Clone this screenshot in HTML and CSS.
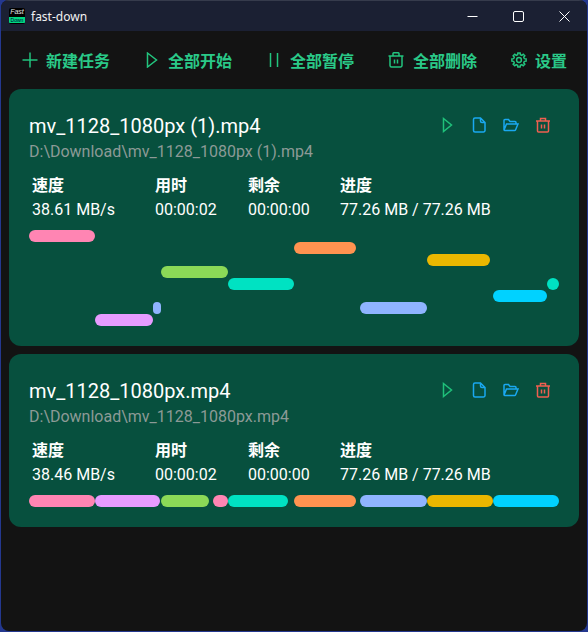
FILE: index.html
```html
<!DOCTYPE html>
<html lang="zh">
<head>
<meta charset="utf-8">
<title>fast-down</title>
<link rel="stylesheet" href="styles.css">
</head>
<body>
<div class="window">
  <header class="titlebar">
    <div class="logo"><span class="logo-fast">Fast</span><span class="logo-down">Down</span></div>
    <span class="app-name">fast-down</span>
    <div class="win-controls">
      <svg class="win-icon" viewBox="0 0 11 11"><path d="M.5 5.500h10" /></svg>
      <svg class="win-icon" viewBox="0 0 11 11"><rect x=".5" y=".5" width="10" height="10" rx="1.500" /></svg>
      <svg class="win-icon" viewBox="0 0 11 11"><path d="M.5 .5l10 10M10.500 .5l-10 10" /></svg>
    </div>
  </header>
  <nav class="toolbar">
    <button class="tool"><svg class="tool-icon" viewBox="0 0 16 16"><path d="M8 .5v15M.5 8h15" /></svg>新建任务</button>
    <button class="tool"><svg class="tool-icon" viewBox="0 0 16 16"><path d="M3.500 1l9 7-9 7z" /></svg>全部开始</button>
    <button class="tool"><svg class="tool-icon" viewBox="0 0 16 16"><path d="M4.500 1v14M11.500 1v14" /></svg>全部暂停</button>
    <button class="tool tool-del"><svg class="tool-icon" viewBox="0 0 16 16"><path d="M.5 4h15M5 4V1.500A1 1 0 0 1 6 .8h4a1 1 0 0 1 1 .7V4M2 4v9.500A1.500 1.500 0 0 0 3.500 15h9a1.500 1.500 0 0 0 1.500-1.500V4M6.500 7.500v4M9.500 7.500v4" /></svg>全部删除</button>
    <button class="tool"><svg class="tool-icon" viewBox="0 0 16 16"><circle cx="8" cy="8" r="2.400" /><path d="M6.670 2.660L6.870 .89H9.130L9.330 2.660L10.830 3.290L12.230 2.180L13.820 3.770L12.710 5.170L13.340 6.670L15.110 6.870V9.130L13.340 9.330L12.710 10.830L13.820 12.230L12.230 13.820L10.830 12.710L9.330 13.340L9.130 15.110H6.870L6.670 13.340L5.170 12.710L3.770 13.820L2.180 12.230L3.290 10.830L2.660 9.330L.89 9.130V6.870L2.660 6.670L3.290 5.170L2.180 3.770L3.770 2.180L5.170 3.290Z" /></svg>设置</button>
  </nav>
  <main class="list">
    <article class="card">
      <div class="card-head">
        <div>
          <h2 class="file-name">mv_1128_1080px (1).mp4</h2>
          <p class="file-path">D:\Download\mv_1128_1080px (1).mp4</p>
        </div>
        <div class="actions">
          <svg class="act act-green" viewBox="0 0 16 16"><path d="M4.500 1.500l8 6.500-8 6.500z" /></svg>
          <svg class="act act-blue" viewBox="0 0 16 16"><path d="M4 1h5.500L14 5.500v8a1.500 1.500 0 0 1-1.500 1.500h-8.500A1.500 1.500 0 0 1 2.500 13.500V2.500A1.500 1.500 0 0 1 4 1zM9.500 1v3a1.500 1.500 0 0 0 1.500 1.500h3" /></svg>
          <svg class="act act-blue" viewBox="0 0 16 16"><path d="M1 13V3.500A1 1 0 0 1 2 2.500h3.500l1.500 2h5a1 1 0 0 1 1 1V7M1 13l2.500-6H15l-2.500 6a1 1 0 0 1-1 .5H2a1 1 0 0 1-1-.5z" /></svg>
          <svg class="act act-red" viewBox="0 0 16 16"><path d="M1 4h14M5.500 4V1.500h5V4M2.500 4v10a1 1 0 0 0 1 1h9a1 1 0 0 0 1-1V4M6.500 7.500v4M9.500 7.500v4" /></svg>
        </div>
      </div>
      <div class="stats">
        <div class="stat stat-speed"><b>速度</b><span>38.61 MB/s</span></div>
        <div class="stat stat-used"><b>用时</b><span>00:00:02</span></div>
        <div class="stat stat-left"><b>剩余</b><span>00:00:00</span></div>
        <div class="stat"><b>进度</b><span>77.26 MB / 77.26 MB</span></div>
      </div>
      <div class="track track-tall">
        <i class="bar pink" style="left:0;top:0;width:66px"></i>
        <i class="bar lilac" style="left:66px;top:84px;width:58px"></i>
        <i class="bar periwinkle" style="left:124px;top:72px;width:8px"></i>
        <i class="bar green" style="left:132px;top:36px;width:67px"></i>
        <i class="bar teal" style="left:199px;top:48px;width:66px"></i>
        <i class="bar orange" style="left:265px;top:12px;width:62px"></i>
        <i class="bar periwinkle" style="left:331px;top:72px;width:67px"></i>
        <i class="bar yellow" style="left:398px;top:24px;width:63px"></i>
        <i class="bar cyan" style="left:464px;top:60px;width:54px"></i>
        <i class="bar teal" style="left:518px;top:48px;width:12px"></i>
      </div>
    </article>
    <article class="card">
      <div class="card-head">
        <div>
          <h2 class="file-name">mv_1128_1080px.mp4</h2>
          <p class="file-path">D:\Download\mv_1128_1080px.mp4</p>
        </div>
        <div class="actions">
          <svg class="act act-green" viewBox="0 0 16 16"><path d="M4.500 1.500l8 6.500-8 6.500z" /></svg>
          <svg class="act act-blue" viewBox="0 0 16 16"><path d="M4 1h5.500L14 5.500v8a1.500 1.500 0 0 1-1.500 1.500h-8.500A1.500 1.500 0 0 1 2.500 13.500V2.500A1.500 1.500 0 0 1 4 1zM9.500 1v3a1.500 1.500 0 0 0 1.500 1.500h3" /></svg>
          <svg class="act act-blue" viewBox="0 0 16 16"><path d="M1 13V3.500A1 1 0 0 1 2 2.500h3.500l1.500 2h5a1 1 0 0 1 1 1V7M1 13l2.500-6H15l-2.500 6a1 1 0 0 1-1 .5H2a1 1 0 0 1-1-.5z" /></svg>
          <svg class="act act-red" viewBox="0 0 16 16"><path d="M1 4h14M5.500 4V1.500h5V4M2.500 4v10a1 1 0 0 0 1 1h9a1 1 0 0 0 1-1V4M6.500 7.500v4M9.500 7.500v4" /></svg>
        </div>
      </div>
      <div class="stats">
        <div class="stat stat-speed"><b>速度</b><span>38.46 MB/s</span></div>
        <div class="stat stat-used"><b>用时</b><span>00:00:02</span></div>
        <div class="stat stat-left"><b>剩余</b><span>00:00:00</span></div>
        <div class="stat"><b>进度</b><span>77.26 MB / 77.26 MB</span></div>
      </div>
      <div class="track track-flat">
        <i class="bar pink" style="left:0;top:0;width:66px"></i>
        <i class="bar lilac" style="left:66px;top:0;width:65px"></i>
        <i class="bar green" style="left:132px;top:0;width:48px"></i>
        <i class="bar pink" style="left:184px;top:0;width:15px"></i>
        <i class="bar teal" style="left:199px;top:0;width:60px"></i>
        <i class="bar orange" style="left:265px;top:0;width:62px"></i>
        <i class="bar periwinkle" style="left:331px;top:0;width:67px"></i>
        <i class="bar yellow" style="left:398px;top:0;width:66px"></i>
        <i class="bar cyan" style="left:464px;top:0;width:66px"></i>
      </div>
    </article>
  </main>
</div>
</body>
</html>
```

FILE: styles.css
```css
* { box-sizing: border-box; }
html, body { margin: 0; height: 100%; }
body {
  background: #24388f;
  font-family: Roboto, "Noto Sans CJK SC", sans-serif;
  overflow: hidden;
}
.window {
  height: 631px;
  margin: 0 1px;
  background: #131313;
  border-radius: 8px;
  overflow: hidden;
  display: flex;
  flex-direction: column;
}
.titlebar {
  height: 31px;
  flex: none;
  background: #1b2033;
  border-top: 1px solid #363b4c;
  display: flex;
  align-items: center;
  padding-left: 8px;
  color: #fff;
}
.logo {
  width: 16px;
  height: 16px;
  background: #000;
  border-radius: 2px;
  display: flex;
  flex-direction: column;
  align-items: center;
  overflow: hidden;
  font-family: "Liberation Sans", sans-serif;
  line-height: 8px;
  font-size: 7px;
  font-style: italic;
}
.logo-fast { height: 9px; color: #e8e8e8; }
.logo-down { height: 6px; width: 100%; background: #00d882; color: #003; font-size: 5px; line-height: 6px; text-align: center; font-style: normal; }
.app-name { margin-left: 6px; font-size: 12px; font-family: "Noto Sans", sans-serif; color: #f2f2f2; }
.win-controls { margin-left: auto; display: flex; height: 100%; align-items: center; }
.win-icon {
  width: 11px;
  height: 11px;
  margin: 0 17.500px;
  fill: none;
  stroke: #fff;
  stroke-width: 1;
}
.toolbar {
  height: 58px;
  flex: none;
  display: flex;
  align-items: center;
  gap: 34px;
  padding-left: 21px;
}
.tool {
  background: none;
  border: 0;
  padding: 0;
  display: flex;
  align-items: center;
  gap: 8px;
  color: #2ac988;
  font: 700 16px "Noto Sans CJK SC", sans-serif;
  white-space: nowrap;
}
.tool-del { gap: 9px; }
.tool-icon { width: 16px; height: 16px; fill: none; stroke: #22c47e; stroke-width: 1.500; flex: none; }
.list { padding: 0 8px; display: flex; flex-direction: column; gap: 8px; }
.card {
  background: #07503e;
  border-radius: 12px;
  padding: 25px 20px 20px;
}
.card-head { display: flex; justify-content: space-between; align-items: flex-start; }
.file-name { margin: 0; font-size: 20px; font-weight: 400; line-height: 24px; color: #fff; }
.file-path { margin: 4px 0 0; font-size: 16px; line-height: 20px; color: #8c9a96; }
.actions { display: flex; gap: 16px; margin: 3px 8px 0 0; }
.act { width: 16px; height: 16px; fill: none; stroke-width: 1.500; }
.act-green { stroke: #1fc07a; }
.act-blue { stroke: #1aa8f0; }
.act-red { stroke: #ef5f50; }
.stats { display: flex; margin-top: 10px; padding-left: 3px; color: #fff; }
.stat { display: flex; flex-direction: column; font-size: 16px; line-height: 24px; }
.stat span { margin-top: 2px; }
.stat b { font-family: "Noto Sans CJK SC", sans-serif; font-weight: 700; }
.stat-speed { width: 123px; }
.stat-used { width: 93px; }
.stat-left { width: 92px; }
.track { position: relative; margin-top: 8px; }
.track-tall { height: 96px; }
.track-flat { height: 12px; }
.bar { position: absolute; height: 12px; border-radius: 6px; display: block; }
.pink { background: #ff85b3; }
.lilac { background: #e79bff; }
.periwinkle { background: #8fb4ff; }
.green { background: #8bd957; }
.teal { background: #00e2c2; }
.orange { background: #ff9350; }
.yellow { background: #ebb700; }
.cyan { background: #00d2ff; }
```
